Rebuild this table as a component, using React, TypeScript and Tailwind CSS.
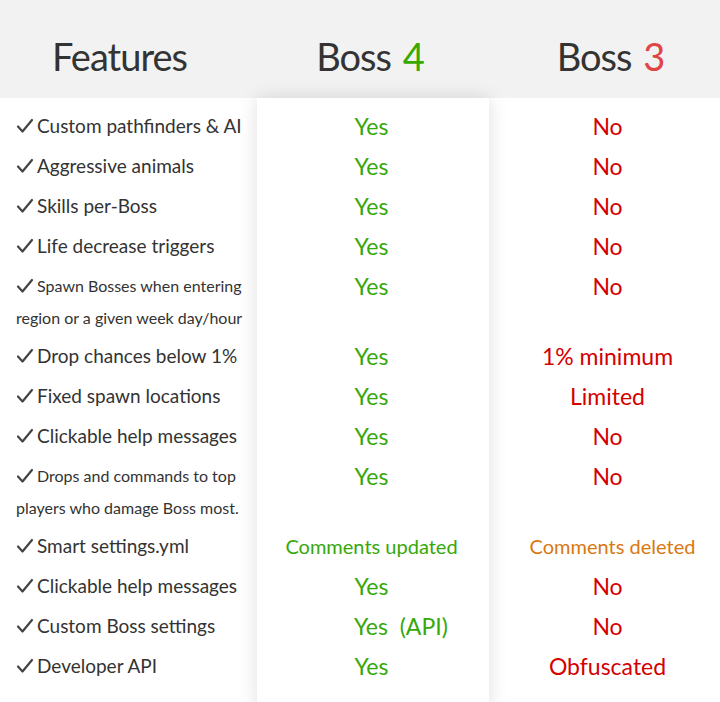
type Row = {
  feature: string
  extra?: string
  small?: boolean
  boss4: string
  boss3: string
  b4Small?: boolean
  b4Left?: boolean
  b3Tone?: 'red' | 'orange'
}

const rows: Row[] = [
  { feature: 'Custom pathfinders & AI', boss4: 'Yes', boss3: 'No' },
  { feature: 'Aggressive animals', boss4: 'Yes', boss3: 'No' },
  { feature: 'Skills per-Boss', boss4: 'Yes', boss3: 'No' },
  { feature: 'Life decrease triggers', boss4: 'Yes', boss3: 'No' },
  { feature: 'Spawn Bosses when entering', extra: 'region or a given week day/hour', small: true, boss4: 'Yes', boss3: 'No' },
  { feature: 'Drop chances below 1%', boss4: 'Yes', boss3: '1% minimum' },
  { feature: 'Fixed spawn locations', boss4: 'Yes', boss3: 'Limited' },
  { feature: 'Clickable help messages', boss4: 'Yes', boss3: 'No' },
  { feature: 'Drops and commands to top', extra: 'players who damage Boss most.', small: true, boss4: 'Yes', boss3: 'No' },
  { feature: 'Smart settings.yml', boss4: 'Comments updated', boss3: 'Comments deleted', b4Small: true, b3Tone: 'orange' },
  { feature: 'Clickable help messages', boss4: 'Yes', boss3: 'No' },
  { feature: 'Custom Boss settings', boss4: 'Yes\u00a0\u00a0(API)', boss3: 'No', b4Left: true },
  { feature: 'Developer API', boss4: 'Yes', boss3: 'Obfuscated' },
]

function Tick() {
  return (
    <svg viewBox="0 0 18 18" className="w-[18px] h-[18px] mr-[3px] shrink-0 text-[#444]" fill="none" stroke="currentColor" strokeWidth="2.2" strokeLinecap="round" strokeLinejoin="round">
      <path d="M2 9.5 L6.5 14.5 L16 3" />
    </svg>
  )
}

export default function App() {
  return (
    <div className="w-[720px] h-[702px] bg-white overflow-hidden" style={{ fontFamily: 'Lato, "Open Sans", sans-serif' }}>
      {/* Header */}
      <div className="h-[98px] bg-[#f2f2f2] flex items-center text-[#333] text-[38px] tracking-[-1px] leading-none pt-[14px]">
        <div className="w-[257px] text-center pr-[18px]">Features</div>
        <div className="w-[232px] text-center pr-[6px]">
          Boss <span className="text-[#36a800] ml-[3px]">4</span>
        </div>
        <div className="w-[231px] text-center pl-[12px]">
          Boss <span className="text-[#e04545] ml-[3px]">3</span>
        </div>
      </div>

      {/* Body */}
      <div className="flex pt-[8px] h-[604px]">
        <div className="w-[257px] flex flex-col text-[#333]">
          {rows.map((r, i) => (
            <div key={i} className={r.extra ? 'h-[70px]' : 'h-[40px]'}>
              <div className={`h-[40px] flex items-center pl-[16px] ${r.small ? 'text-[16px]' : 'text-[19px]'}`}>
                <Tick />
                {r.feature}
              </div>
              {r.extra && <div className="pl-[16px] text-[16px] leading-[24px]">{r.extra}</div>}
            </div>
          ))}
        </div>

        <div className="w-[232px] relative z-10 bg-white shadow-[0_0_18px_rgba(0,0,0,0.13)] flex flex-col -mt-[8px] pt-[8px] h-[612px]">
          {rows.map((r, i) => (
            <div key={i} className={r.extra ? 'h-[70px]' : 'h-[40px]'}>
              <div
                className={`h-[40px] flex items-center text-[#36a80a] ${r.b4Left ? 'justify-start pl-[97px]' : 'justify-center pr-[3px]'} ${r.b4Small ? 'text-[20px]' : 'text-[23px]'}`}
              >
                {r.boss4}
              </div>
            </div>
          ))}
        </div>

        <div className="w-[231px] flex flex-col">
          {rows.map((r, i) => (
            <div key={i} className={r.extra ? 'h-[70px]' : 'h-[40px]'}>
              <div className={`h-[40px] flex items-center justify-center pl-[6px] ${r.b3Tone === 'orange' ? 'text-[#d9780f] text-[20px] pl-[16px]' : 'text-[#d40000] text-[23px]'}`}>
                {r.boss3}
              </div>
            </div>
          ))}
        </div>
      </div>
    </div>
  )
}
